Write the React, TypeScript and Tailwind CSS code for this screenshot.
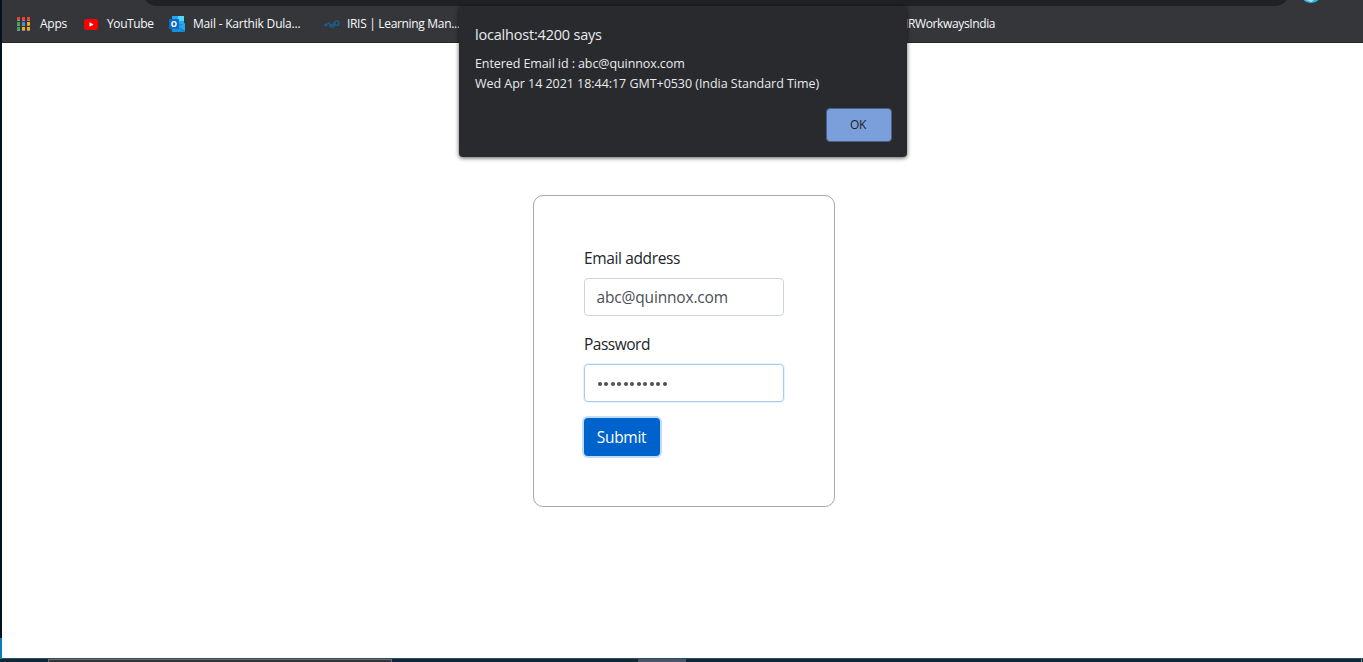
import type { ReactNode } from "react";

const appDots = [
  "#ea4335", "#ea4335", "#ea4335",
  "#34a853", "#4285f4", "#fbab05",
  "#34a853", "#fbab05", "#fbab05",
];

function Bookmark({ icon, label, className }: { icon: ReactNode; label: string; className: string }) {
  return (
    <div className={`flex shrink-0 items-center ${className}`}>
      {icon}
      <span className="whitespace-nowrap">{label}</span>
    </div>
  );
}

function AppsIcon() {
  return (
    <svg width="14" height="14" className="mr-[9px] shrink-0" shapeRendering="crispEdges">
      {appDots.map((fill, i) => (
        <g key={i}>
          <rect x={(i % 3) * 5} y={Math.floor(i / 3) * 5} width="3" height="3" fill={fill} />
          <rect x={(i % 3) * 5} y={Math.floor(i / 3) * 5 + 3} width="3" height="1" fill="#8d8f93" />
        </g>
      ))}
    </svg>
  );
}

function YouTubeIcon() {
  return (
    <svg width="14" height="11" className="mr-[9px] shrink-0">
      <rect width="14" height="11" rx="2.5" fill="#ff0000" />
      <path d="M5.5 3.2 9.6 5.5 5.5 7.8Z" fill="#fff" />
    </svg>
  );
}

function OutlookIcon() {
  return (
    <svg width="16" height="16" className="mr-2 shrink-0">
      <rect x="3" width="12" height="9" fill="#28a8ea" />
      <rect x="9" width="6" height="5" fill="#50d9ff" />
      <rect x="3" y="4" width="6" height="5" fill="#0364b8" />
      <path d="M2 8h14v8H3Z" fill="#1490df" />
      <path d="M16 7v8L9 11Z" fill="#28a8ea" />
      <path d="M9 10l7 5v1Z" fill="#123b6d" opacity=".45" />
      <rect y="3" width="10" height="10" rx="0.7" fill="#0a6cc5" />
      <ellipse cx="5" cy="8" rx="2.1" ry="2.4" fill="none" stroke="#fff" strokeWidth="1.4" />
    </svg>
  );
}

function IrisIcon() {
  return (
    <svg width="16" height="9" className="mr-[7px] shrink-0" fill="none" stroke="#1b5d8e">
      <path d="M0 5.8 5.2 3 6 6.2 10 3" strokeWidth="1.4" />
      <circle cx="2" cy="5" r="1" fill="#1b5d8e" />
      <circle cx="8.5" cy="6" r="1.5" strokeWidth="1.3" />
      <circle cx="12.8" cy="3.2" r="2.1" strokeWidth="1.5" />
    </svg>
  );
}

function AlertDialog() {
  return (
    <div className="absolute left-[459px] top-[6px] flex h-[151px] w-[448px] flex-col rounded bg-[#292a2d] px-4 pt-[18px] text-[#e8eaed] shadow-[0_1px_4px_rgba(0,0,0,0.65)]">
      <h1 className="text-[14.5px] leading-[21px] tracking-[-0.2px]">localhost:4200 says</h1>
      <p className="mt-[9px] whitespace-nowrap text-[12.5px] leading-5">
        <span className="tracking-[-0.09px]">Entered Email id : abc@quinnox.com</span>
        <br />
        <span className="tracking-[-0.04px]">Wed Apr 14 2021 18:44:17 GMT+0530 (India Standard Time)</span>
      </p>
      <button className="mr-[-1px] mt-[14px] flex h-[34px] w-[66px] items-center justify-center self-end rounded border border-[#4a5f89] bg-[#7a9fda] pr-[2px] text-[12px] tracking-[-0.3px] text-[#202124]">
        OK
      </button>
    </div>
  );
}

export default function App() {
  return (
    <div className="relative flex h-[662px] w-[1363px] flex-col overflow-hidden bg-white font-['Open_Sans','Noto_Sans',sans-serif]">
      <div className="flex h-[659px]">
        <div className="flex w-[2px] shrink-0 flex-col bg-[#04121f]">
          <div className="mt-auto h-[21px] bg-[#087fb5]" />
        </div>
        <div className="flex min-w-0 flex-1 flex-col border-b border-[#205268]">
          <header className="flex h-[43px] shrink-0 flex-col border-b border-[#242327] bg-[#35363a]">
            <div className="flex h-[6px] items-start overflow-hidden">
              <div className="-mt-[22px] ml-[141px] h-[28px] w-[1146px] rounded-[14px] bg-[#202124]" />
              <svg width="16" height="4" className="ml-[14px]">
                <ellipse cx="8" cy="-2" rx="8" ry="5" fill="#2bb5dc" />
                <path d="M3 0h8l-3 2Z" fill="#b8d9e8" />
              </svg>
            </div>
            <nav className="flex h-[36px] items-center text-[12px] tracking-[-0.25px] text-[#f8f9fa]">
              <Bookmark icon={<AppsIcon />} label="Apps" className="ml-[15px] w-[67px]" />
              <Bookmark icon={<YouTubeIcon />} label="YouTube" className="w-[85px] tracking-[-0.4px]" />
              <Bookmark icon={<OutlookIcon />} label="Mail - Karthik Dula..." className="w-[155px] tracking-[-0.2px]" />
              <Bookmark icon={<IrisIcon />} label="IRIS | Learning Man..." className="w-[581px] tracking-[-0.32px]" />
              <span className="tracking-[-0.37px]">IRWorkwaysIndia</span>
            </nav>
          </header>
          <main className="flex flex-1 items-start pl-[531px] pt-[152px]">
            <form className="flex h-[312px] w-[302px] flex-col rounded-[10px] border border-[#a9a9a9] px-[50px] pt-[50px] text-[15.5px] leading-6 tracking-[-0.37px] text-[#212529]">
              <label className="mb-2">Email address</label>
              <div className="flex h-[38px] items-center rounded-[4px] border border-[#ced4da] pl-[11.5px] tracking-[-0.17px] text-[#495057]">
                abc@quinnox.com
              </div>
              <label className="mb-2 mt-4 tracking-[-0.5px]">Password</label>
              <div className="flex h-[38px] items-center gap-[2.5px] rounded-[4px] border border-[#a9cbee] px-[12.5px] shadow-[0_0_0_1px_rgba(0,123,255,0.1)]">
                {Array.from({ length: 11 }, (_, i) => (
                  <span key={i} className="mt-[2px] size-[4px] rounded-full bg-[#495057]" />
                ))}
              </div>
              <button type="button" className="mt-4 flex h-[38px] w-[76px] items-center justify-center rounded-[4px] bg-[#0062cc] pr-px tracking-[-0.3px] text-white shadow-[0_0_0_2px_#bfdeff]">
                Submit
              </button>
            </form>
          </main>
        </div>
      </div>
      <footer className="flex h-[3px] bg-[#132737]">
        <div className="ml-12 h-full w-[344px] border-x border-t border-[#6b6b6b] bg-[#343434]" />
        <div className="ml-[246px] h-full w-12 bg-[#4a5561]" />
        <div className="ml-auto mr-px h-full w-px bg-[#7c8790]" />
      </footer>
      <AlertDialog />
    </div>
  );
}
